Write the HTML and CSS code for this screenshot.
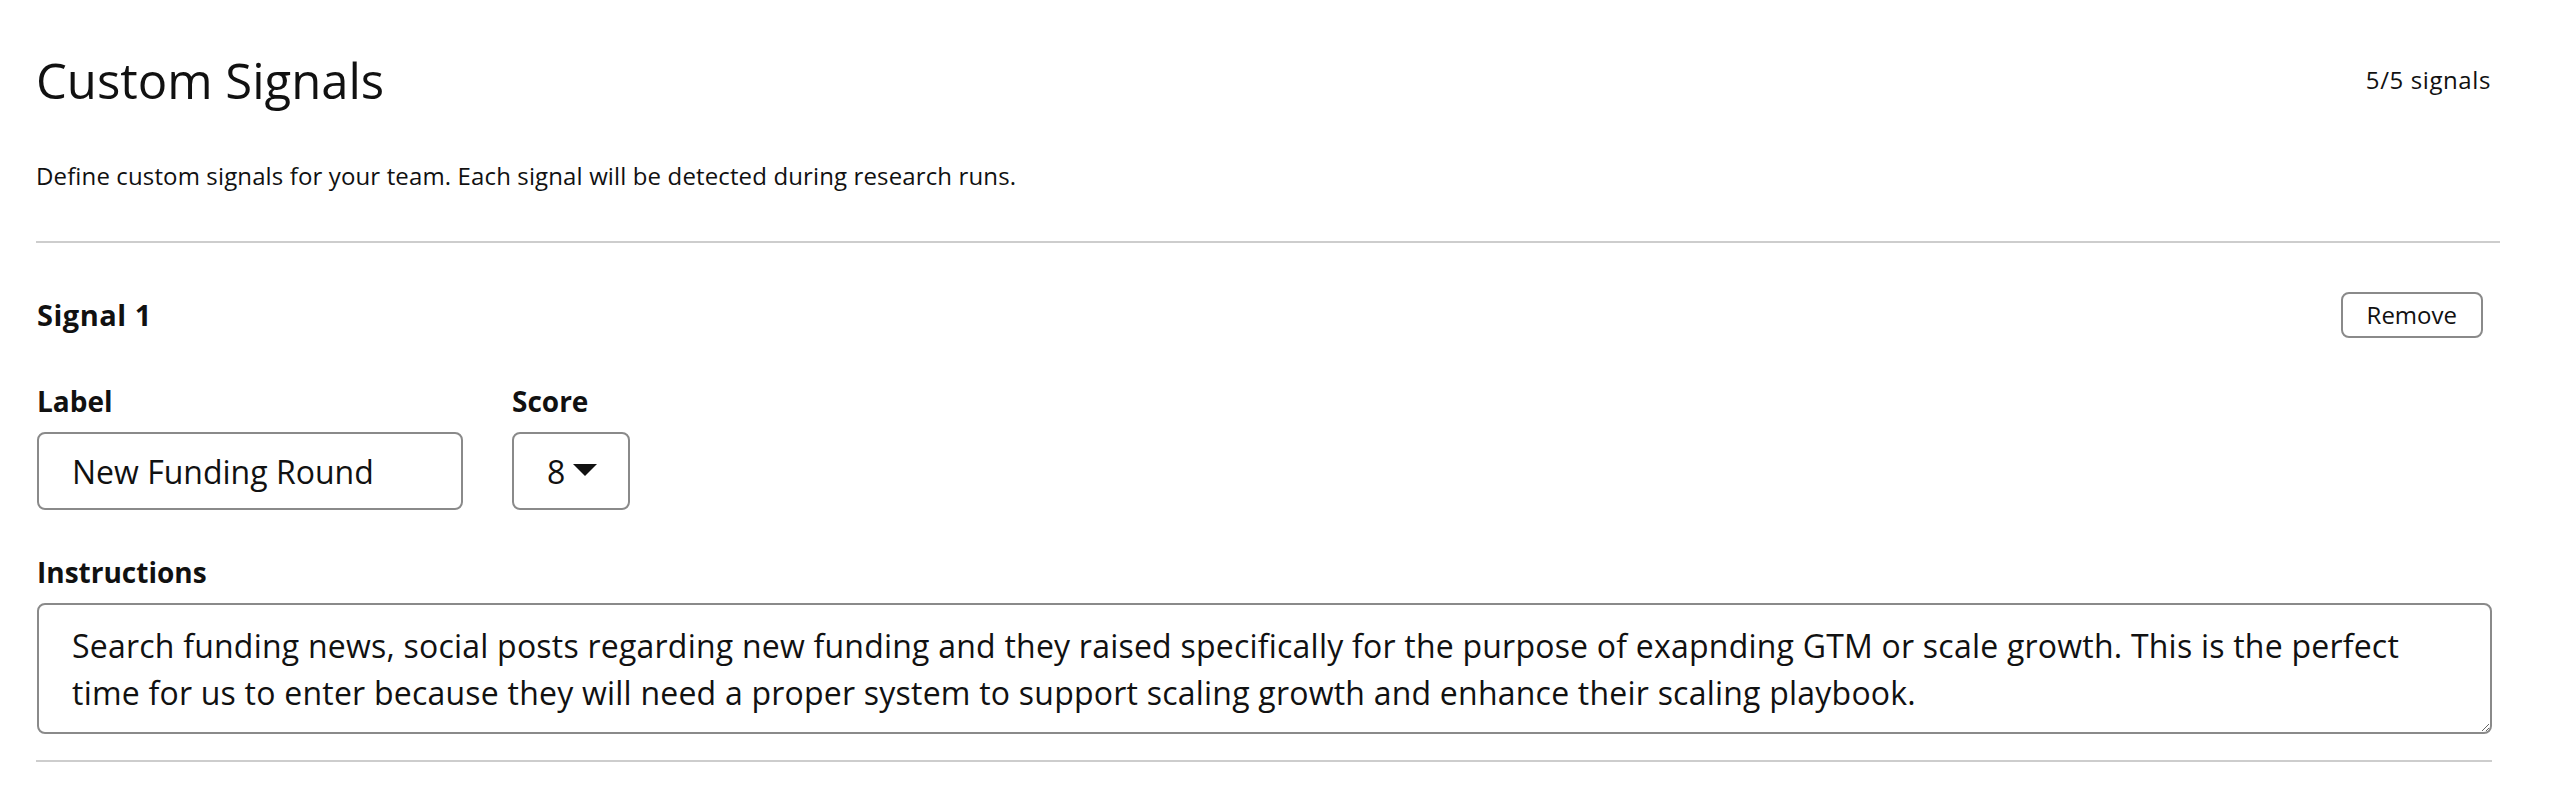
FILE: index.html
```html
<!DOCTYPE html>
<html lang="en">
<head>
<meta charset="utf-8">
<title>Custom Signals</title>
<link rel="stylesheet" href="styles.css">
</head>
<body>
<main class="page">
  <header class="page-head">
    <h1 class="title">Custom Signals</h1>
    <span class="count">5/5 signals</span>
  </header>
  <p class="desc">Define custom signals for your team. Each signal will be detected during research runs.</p>
  <div class="signals">
    <section class="signal">
      <div class="signal-head">
        <h2 class="signal-name">Signal 1</h2>
        <button class="btn-remove" type="button">Remove</button>
      </div>
      <div class="row">
        <div class="field field-label">
          <label class="field-title" for="lbl1">Label</label>
          <input class="input" id="lbl1" type="text" value="New Funding Round">
        </div>
        <div class="field">
          <span class="field-title">Score</span>
          <div class="select" role="combobox" aria-label="Score">
            <span class="select-value">8</span>
            <svg class="select-arrow" width="24" height="12" viewBox="0 0 24 12" aria-hidden="true"><polygon points="0,0 24,0 12,12" fill="#111"/></svg>
          </div>
        </div>
      </div>
      <div class="field field-instr">
        <label class="field-title" for="ins1">Instructions</label>
        <textarea class="textarea" id="ins1" rows="2">Search funding news, social posts regarding new funding and they raised specifically for the purpose of exapnding GTM or scale growth. This is the perfect time for us to enter because they will need a proper system to support scaling growth and enhance their scaling playbook.</textarea>
      </div>
    </section>
  </div>
</main>
</body>
</html>
```

FILE: styles.css
```css
* { box-sizing: border-box; }

html, body {
  margin: 0;
  padding: 0;
  background: #ffffff;
}

.page {
  padding: 50px 56px 0 36px;
  font-family: "Open Sans", "Noto Sans", sans-serif;
  color: #111111;
}

.page-head {
  display: flex;
  justify-content: space-between;
  align-items: center;
  padding-right: 9px;
  height: 60px;
}

.title {
  margin: 0;
  font-size: 49px;
  line-height: 60px;
  font-weight: 400;
}

.count {
  font-size: 24px;
  line-height: 30px;
  letter-spacing: 0.6px;
}

.desc {
  margin: 49px 0 0 0;
  font-size: 24px;
  line-height: 33px;
  letter-spacing: 0.13px;
  padding-bottom: 49px;
  border-bottom: 2px solid #cdcdcd;
}

.signals {
  margin-right: 8px;
}

.signal {
  padding: 49px 0 26px 1px;
  border-bottom: 2px solid #cdcdcd;
}

.signal-head {
  display: flex;
  justify-content: space-between;
  align-items: center;
  padding-right: 9px;
  height: 46px;
}

.signal-name {
  margin: 0;
  font-size: 29px;
  line-height: 34px;
  font-weight: 700;
  letter-spacing: 0.5px;
}

.btn-remove {
  font-family: inherit;
  font-size: 24px;
  line-height: 30px;
  color: #111;
  background: #fff;
  border: 2px solid #8a8a8a;
  border-radius: 8px;
  padding: 6px 24px;
  height: 46px;
}

.row {
  display: flex;
  gap: 49px;
  margin-top: 46px;
}

.field {
  display: flex;
  flex-direction: column;
  gap: 14px;
}

.field-title {
  font-size: 28px;
  line-height: 34px;
  font-weight: 700;
}

.input {
  width: 426px;
  height: 78px;
  border: 2px solid #8a8a8a;
  border-radius: 8px;
  padding: 0 33px;
  font-family: inherit;
  font-size: 32px;
  color: #111;
  outline: none;
}

.select {
  display: flex;
  align-items: center;
  gap: 8px;
  width: 118px;
  height: 78px;
  border: 2px solid #8a8a8a;
  border-radius: 8px;
  padding: 0 0 0 33px;
  font-size: 32px;
}

.select-arrow {
  display: block;
  margin-top: -2px;
}

.field-instr {
  margin-top: 45px;
}

.textarea {
  width: 100%;
  height: 131px;
  border: 2px solid #8a8a8a;
  border-radius: 8px;
  padding: 17px 48px 16px 33px;
  font-family: inherit;
  font-size: 32px;
  line-height: 47px;
  letter-spacing: 0.22px;
  color: #111;
  resize: vertical;
  outline: none;
  display: block;
}
```
